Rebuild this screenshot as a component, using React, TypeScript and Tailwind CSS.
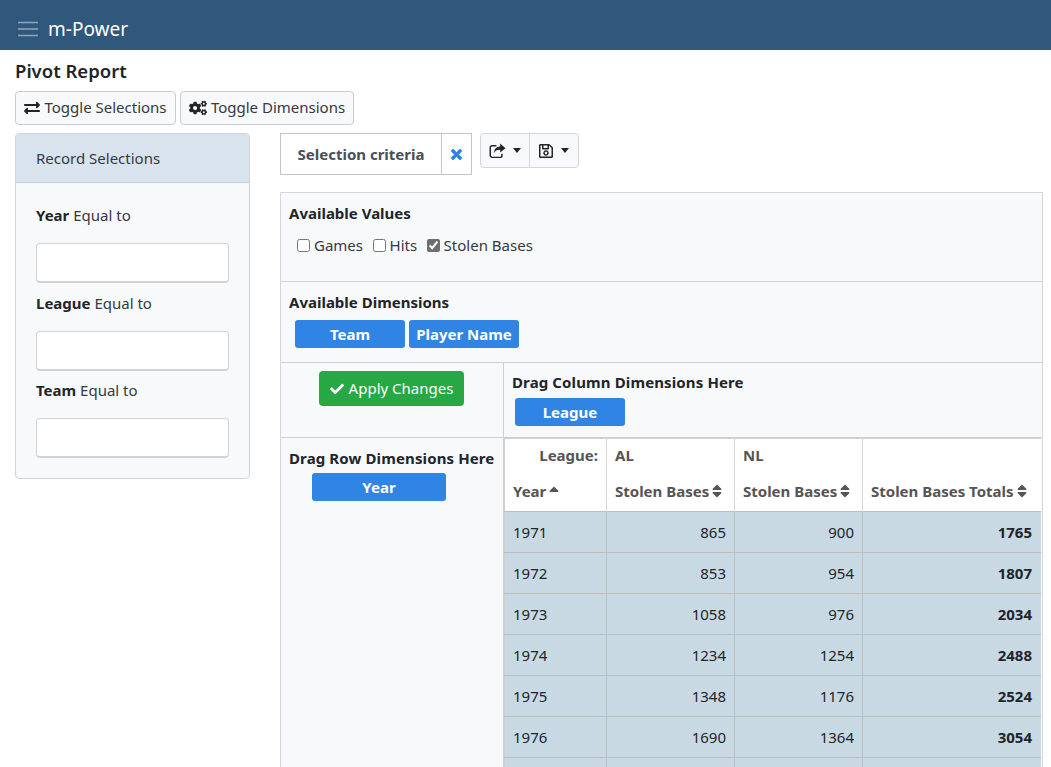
import { FaCheck, FaCogs, FaExchangeAlt, FaRegSave, FaSort, FaSortUp, FaTimes } from "react-icons/fa";

const rows = [
    ["1971", "865", "900", "1765"],
    ["1972", "853", "954", "1807"],
    ["1973", "1058", "976", "2034"],
    ["1974", "1234", "1254", "2488"],
    ["1975", "1348", "1176", "2524"],
    ["1976", "1690", "1364", "3054"],
    ["", "", "", ""],
];

function Filter({ name }: { name: string }) {
    return (
        <div className="mb-[7.5px]">
            <div className="h-[24px] leading-[24px] mb-[16px] text-[#343a40]">
                <b className="font-bold text-[#212529]">{name}</b> Equal to
            </div>
            <div className="h-[40px] bg-white border border-[#ced4da] border-b-2 rounded-[4px]" />
        </div>
    );
}

function Dim({ label, className }: { label: string; className: string }) {
    return (
        <div className={`h-[28px] bg-[#3085e4] rounded-[3px] text-white font-bold text-center leading-[28px] ${className}`}>
            {label}
        </div>
    );
}

function Check({ label, checked }: { label: string; checked?: boolean }) {
    return (
        <label className="flex items-center gap-[4px]">
            <input type="checkbox" defaultChecked={checked} className="w-[13px] h-[13px] accent-[#6e6e6e]" />
            {label}
        </label>
    );
}

function ShareIcon() {
    return (
        <svg width="17" height="16" viewBox="0 0 16 15" fill="none">
            <path d="M7 2.5H3a1.8 1.8 0 0 0-1.8 1.8v7.4A1.8 1.8 0 0 0 3 13.5h7.4a1.8 1.8 0 0 0 1.8-1.8V10" stroke="currentColor" strokeWidth="1.4" />
            <path d="M10.5 0.5L15.5 4.8L10.5 9V6.4C7.5 6.4 5.6 7.2 4.6 9.6C4.6 5.8 6.8 3.4 10.5 3.2Z" fill="currentColor" />
        </svg>
    );
}

export default function App() {
    return (
        <div className="h-[767px] overflow-hidden bg-white text-[#212529] text-[15px] font-['Noto_Sans','Open_Sans',sans-serif]">
            <div className="h-[50px] bg-[#30577c] flex items-center pt-[8px] pl-[18px] gap-[10px] text-white">
                <svg width="20" height="16" viewBox="0 0 20 16" stroke="#8fa5ba" strokeWidth="1.6">
                    <path d="M0 1.5H20M0 8H20M0 14.5H20" />
                </svg>
                <span className="text-[19px]">m-Power</span>
            </div>
            <div className="px-[15px]">
                <h1 className="text-[18.5px] font-semibold leading-[22px] mt-[10px]">Pivot Report</h1>
                <div className="flex gap-[4px] mt-[9px]">
                    <button className="h-[34px] w-[161px] flex items-center justify-center gap-[4px] pb-[2px] bg-[#f8f9fa] border border-[#ccc] rounded-[4px] text-[#343a40]">
                        <FaExchangeAlt size={16} className="mt-[2px] text-[#212529]" />
                        Toggle Selections
                    </button>
                    <button className="h-[34px] w-[174px] flex items-center justify-center gap-[4px] pb-[2px] bg-[#f8f9fa] border border-[#ccc] rounded-[4px] text-[#343a40]">
                        <FaCogs size={18} className="mt-[2px] text-[#212529]" />
                        Toggle Dimensions
                    </button>
                </div>
                <div className="flex mt-[8px]">
                    <div className="w-[235px] h-[346px] shrink-0 bg-[#f8f9fa] border border-[#d0d5da] rounded-[4px] overflow-hidden">
                        <div className="h-[49px] bg-[#d9e3ed] border-b border-[#c3ced9] pl-[20px] leading-[48px] text-[#343a40]">Record Selections</div>
                        <div className="px-[20px] pt-[20px]">
                            <Filter name="Year" />
                            <Filter name="League" />
                            <Filter name="Team" />
                        </div>
                    </div>
                    <div className="w-[763px] ml-[30px] shrink-0">
                        <div className="flex items-start">
                            <div className="h-[42px] w-[162px] border border-[#c4c4c4] font-bold text-[#495057] flex items-center justify-center">Selection criteria</div>
                            <div className="h-[42px] w-[30px] border border-l-0 border-[#c4c4c4] flex items-center justify-center text-[#3085e4]">
                                <FaTimes size={15} stroke="currentColor" strokeWidth={30} />
                            </div>
                            <div className="ml-[8px] h-[35px] w-[99px] flex bg-[#f8f9fa] border border-[#d5d8db] rounded-[4px]">
                                <div className="w-[49px] border-r border-[#d5d8db] flex items-center justify-center gap-[7px] pr-[1px]">
                                    <ShareIcon />
                                    <span className="border-x-[4.5px] border-x-transparent border-t-[5px] border-t-[#212529]" />
                                </div>
                                <div className="flex-1 flex items-center justify-center gap-[7px] pr-[2px]">
                                    <FaRegSave size={16} />
                                    <span className="border-x-[4.5px] border-x-transparent border-t-[5px] border-t-[#212529]" />
                                </div>
                            </div>
                        </div>
                        <div className="mt-[17px] bg-[#f8f9fa] border border-[#d5d8db]">
                            <div className="h-[89px] border-b border-[#d0d0d0] px-[8px] pt-[9px]">
                                <div className="font-bold leading-[22px]">Available Values</div>
                                <div className="flex gap-[9.5px] mt-[10px] pl-[8px] leading-[22px] text-[#343a40]">
                                    <Check label="Games" />
                                    <Check label="Hits" />
                                    <Check label="Stolen Bases" checked />
                                </div>
                            </div>
                            <div className="h-[81px] border-b border-[#d0d0d0] px-[8px] pt-[9px]">
                                <div className="font-bold leading-[22px]">Available Dimensions</div>
                                <div className="flex gap-[4px] mt-[7px] pl-[6px]">
                                    <Dim label="Team" className="w-[110px]" />
                                    <Dim label="Player Name" className="w-[110px]" />
                                </div>
                            </div>
                            <div className="flex">
                                <div className="w-[223px] h-[75px] shrink-0 border-r border-[#d0d0d0] border-b pt-[8px] flex justify-center">
                                    <div className="h-[35px] w-[145px] bg-[#28a745] rounded-[4px] text-white flex items-center justify-center gap-[5px] mr-[1px]">
                                        <FaCheck size={14} />
                                        Apply Changes
                                    </div>
                                </div>
                                <div className="flex-1 h-[75px] border-b border-[#d0d0d0] px-[8px] pt-[8px]">
                                    <div className="font-bold leading-[22px] tracking-[0.12px]">Drag Column Dimensions Here</div>
                                    <Dim label="League" className="w-[110px] ml-[3px] mt-[5px]" />
                                </div>
                            </div>
                            <div className="flex">
                                <div className="w-[223px] shrink-0 border-r border-[#d0d0d0] pt-[9px] pl-[8px]">
                                    <div className="font-bold leading-[22px] tracking-[0.12px] whitespace-nowrap">Drag Row Dimensions Here</div>
                                    <Dim label="Year" className="w-[134px] ml-[23px] mt-[4px]" />
                                </div>
                                <table className="w-[537px] table-fixed border-collapse border-t border-l border-[#d0d0d0] bg-white text-[15px]">
                                    <colgroup>
                                        <col className="w-[102px]" />
                                        <col className="w-[128px]" />
                                        <col className="w-[128px]" />
                                        <col />
                                    </colgroup>
                                    <thead className="text-[#555]">
                                        <tr className="h-[36px]">
                                            <th className="font-bold text-right pr-[8px] pb-[4px] border-r border-[#d8d8d8]">League:</th>
                                            <th className="font-bold text-left pl-[8px] pb-[4px] border-r border-[#d8d8d8]">AL</th>
                                            <th className="font-bold text-left pl-[8px] pb-[4px] border-r border-[#d8d8d8]">NL</th>
                                            <th />
                                        </tr>
                                        <tr className="h-[37px] border-b border-[#bdbdbd]">
                                            <th className="font-bold text-left pl-[8px] pb-[4px] border-r border-[#d8d8d8]">
                                                <span className="inline-flex items-center gap-[3px]">Year <FaSortUp size={16} className="w-[10px] mt-[5px]" /></span>
                                            </th>
                                            <th className="font-bold text-left pl-[8px] pb-[4px] border-r border-[#d8d8d8]">
                                                <span className="inline-flex items-center gap-[3px] whitespace-nowrap">Stolen Bases <FaSort size={16} className="w-[10px]" /></span>
                                            </th>
                                            <th className="font-bold text-left pl-[8px] pb-[4px] border-r border-[#d8d8d8]">
                                                <span className="inline-flex items-center gap-[3px] whitespace-nowrap">Stolen Bases <FaSort size={16} className="w-[10px]" /></span>
                                            </th>
                                            <th className="font-bold text-left pl-[8px] pb-[4px]">
                                                <span className="inline-flex items-center gap-[3px] whitespace-nowrap">Stolen Bases Totals <FaSort size={16} className="w-[10px]" /></span>
                                            </th>
                                        </tr>
                                    </thead>
                                    <tbody>
                                        {rows.map((r, i) => (
                                            <tr key={i} className="h-[41px] bg-[#c9d9e4] border-b border-[#bdbdbd]">
                                                <td className="pl-[8px] border-r border-[#bdbdbd]">{r[0]}</td>
                                                <td className="text-right pr-[8px] border-r border-[#bdbdbd]">{r[1]}</td>
                                                <td className="text-right pr-[8px] border-r border-[#bdbdbd]">{r[2]}</td>
                                                <td className="text-right pr-[9px] font-bold">{r[3]}</td>
                                            </tr>
                                        ))}
                                    </tbody>
                                </table>
                            </div>
                        </div>
                    </div>
                </div>
            </div>
        </div>
    );
}
